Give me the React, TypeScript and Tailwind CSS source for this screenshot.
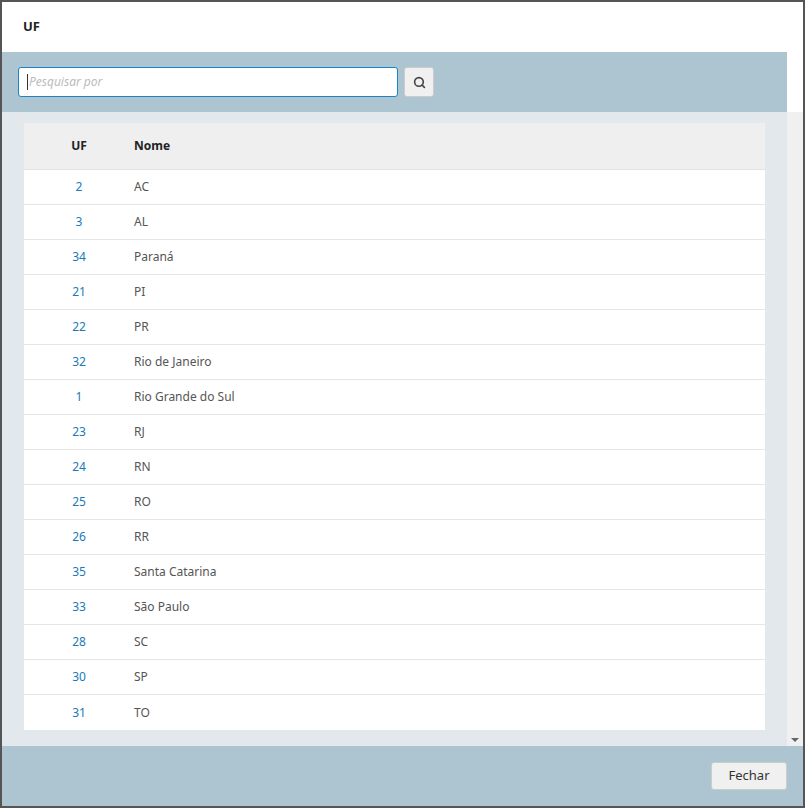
import { Search } from "lucide-react";

const rows: [string, string][] = [
  ["2", "AC"], ["3", "AL"], ["34", "Paraná"], ["21", "PI"], ["22", "PR"],
  ["32", "Rio de Janeiro"], ["1", "Rio Grande do Sul"], ["23", "RJ"], ["24", "RN"],
  ["25", "RO"], ["26", "RR"], ["35", "Santa Catarina"], ["33", "São Paulo"],
  ["28", "SC"], ["30", "SP"], ["31", "TO"],
];

export default function App() {
  return (
    <div className="w-[805px] h-[808px] border-2 border-[#555] bg-white flex flex-col font-['Roboto',sans-serif] text-[12px] text-[#555]">
      <div className="h-[50px] flex items-center px-[21px] font-bold text-[13px] text-[#222] shrink-0">UF</div>
      <div className="h-[60px] bg-[#adc4d1] flex items-center px-4 gap-[6px] shrink-0 mr-[16px]">
        <div className="w-[380px] h-[30px] bg-white border border-[#1a84c4] rounded-[3px] flex items-center px-2 italic text-[#bbb]">
          <span className="w-px h-4 bg-[#333] mr-px" />Pesquisar por
        </div>
        <button className="w-[30px] h-[30px] bg-[#f0f0f0] border border-[#ccc] rounded-[3px] flex items-center justify-center">
          <Search size={13} strokeWidth={3} className="text-[#444]" />
        </button>
      </div>
      <div className="flex-1 flex min-h-0">
        <div className="flex-1 bg-[#e3e8ec] pt-[11px] px-[22px]">
          <div className="bg-white">
            <div className="h-[47px] bg-[#efefef] flex items-center border-b border-[#e3e3e3] font-bold text-[#222]">
              <div className="w-[110px] text-center">UF</div>
              <div>Nome</div>
            </div>
            {rows.map(([uf, n]) => (
              <div key={uf} className="h-[35px] flex items-center border-b border-[#e6e6e6] last:border-b-0">
                <div className="w-[110px] text-center text-[#1a7ab8]">{uf}</div>
                <div>{n}</div>
              </div>
            ))}
          </div>
        </div>
        <div className="w-[16px] bg-[#f0f0f0] flex flex-col justify-end items-center pb-1">
          <div className="w-0 h-0 border-x-[4px] border-x-transparent border-t-[4px] border-t-[#666]" />
        </div>
      </div>
      <div className="h-[60px] bg-[#adc4d1] flex items-center justify-end px-4 shrink-0">
        <button className="w-[76px] h-[28px] bg-[#f0f0f0] border border-[#ccc] rounded-[3px] text-[13px] text-[#333]">Fechar</button>
      </div>
    </div>
  );
}
